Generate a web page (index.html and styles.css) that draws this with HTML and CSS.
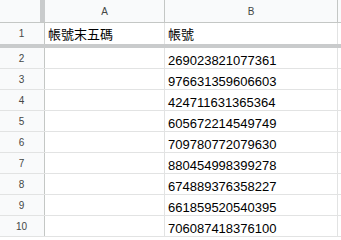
FILE: index.html
```html
<!DOCTYPE html>
<html lang="zh-TW">
<head>
  <meta charset="UTF-8" />
  <meta name="viewport" content="width=device-width, initial-scale=1.0"/>
  <title>帳號</title>
  <link rel="stylesheet" href="styles.css">
</head>
<body>

<div class="sheet">
  <div class="row head-row">
    <div class="corner"></div>
    <div class="col-head col-a">A</div>
    <div class="col-head col-b">B</div>
  </div>

  <div class="row first-row">
    <div class="row-num">1</div>
    <div class="cell col-a">帳號末五碼</div>
    <div class="cell col-b">帳號</div>
  </div>
  <div class="freeze-bar"></div>

  <div class="row"><div class="row-num">2</div><div class="cell col-a"></div><div class="cell col-b">269023821077361</div></div>
  <div class="row"><div class="row-num">3</div><div class="cell col-a"></div><div class="cell col-b">976631359606603</div></div>
  <div class="row"><div class="row-num">4</div><div class="cell col-a"></div><div class="cell col-b">424711631365364</div></div>
  <div class="row"><div class="row-num">5</div><div class="cell col-a"></div><div class="cell col-b">605672214549749</div></div>
  <div class="row"><div class="row-num">6</div><div class="cell col-a"></div><div class="cell col-b">709780772079630</div></div>
  <div class="row"><div class="row-num">7</div><div class="cell col-a"></div><div class="cell col-b">880454998399278</div></div>
  <div class="row"><div class="row-num">8</div><div class="cell col-a"></div><div class="cell col-b">674889376358227</div></div>
  <div class="row"><div class="row-num">9</div><div class="cell col-a"></div><div class="cell col-b">661859520540395</div></div>
  <div class="row"><div class="row-num">10</div><div class="cell col-a"></div><div class="cell col-b">706087418376100</div></div>
</div>

</body>
</html>
```

FILE: styles.css
```css
:root {
  --head-bg: #f9fafb;
  --head-line: #c4c7c5;
  --grid-line: #e2e3e3;
  --freeze: #c9cbcc;
  --head-text: #444746;
}
* {
  box-sizing: border-box;
  margin: 0;
  padding: 0;
}

body {
  background: #fff;
  font-family: "Liberation Sans", Arial, "Noto Sans CJK TC", sans-serif;
  color: #000;
}

.sheet {
  width: 341px;
}

.row {
  display: flex;
  height: 21px;
  border-bottom: 1px solid var(--grid-line);
}

.head-row {
  height: 23px;
  border-bottom: 1px solid var(--head-line);
  background: var(--head-bg);
}

.first-row {
  border-bottom: none;
}

.freeze-bar {
  height: 4px;
  background: var(--freeze);
}

.corner {
  width: 45px;
  border-right: 5px solid var(--freeze);
}

.col-a {
  width: 120px;
}
.col-b {
  width: 173px;
}

.col-head {
  display: flex;
  align-items: center;
  justify-content: center;
  font-size: 10px;
  color: var(--head-text);
  border-right: 1px solid var(--head-line);
}

.row-num {
  width: 45px;
  display: flex;
  align-items: center;
  justify-content: center;
  padding-right: 1px;
  font-size: 10px;
  color: var(--head-text);
  background: var(--head-bg);
  border-right: 1px solid var(--head-line);
}

.cell {
  display: flex;
  align-items: flex-end;
  padding-left: 3px;
  font-size: 13px;
  white-space: nowrap;
  border-right: 1px solid var(--grid-line);
}

.first-row .cell {
  align-items: center;
  font-family: "Noto Sans CJK TC", sans-serif;
  color: #000;
}
```
